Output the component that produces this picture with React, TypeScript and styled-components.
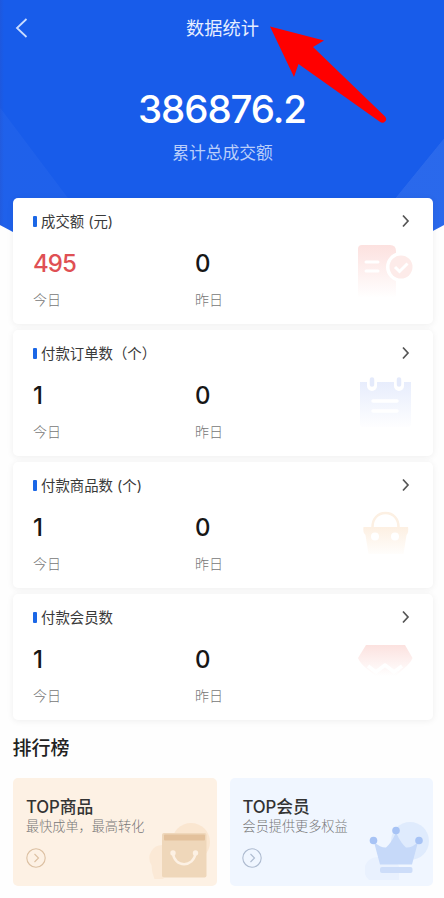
import React from 'react';
import styled, { createGlobalStyle } from 'styled-components';

const GlobalStyle = createGlobalStyle`
  * { box-sizing: border-box; }
  body {
    margin: 0;
    background: #fefefe;
    font-family: Inter, "Noto Sans CJK SC", sans-serif;
    color: #333;
  }
`;

const Page = styled.main`
  position: relative;
  width: 444px;
  height: 898px;
  overflow: hidden;
`;

const Header = styled.header`
  display: flex;
  flex-direction: column;
  align-items: center;
  height: 240px;
  color: #fff;
  background:
    linear-gradient(90deg, rgba(40, 80, 200, 0.35), transparent) left top / 4px 100% no-repeat,
    linear-gradient(to bottom right, transparent 50%, rgba(255, 255, 255, 0.08) 50.5%) right bottom / 83px 102px no-repeat,
    linear-gradient(to bottom left, transparent 50%, rgba(255, 255, 255, 0.03) 50.5%) left bottom / 100px 133px no-repeat,
    #185cea;
  clip-path: polygon(0 0, 100% 0, 100% 225px, 431px 232px, 400px 240px, 44px 240px, 13px 232px, 0 225px);
`;

const NavBar = styled.nav`
  display: grid;
  grid-template-columns: 60px 1fr 60px;
  align-items: center;
  width: 100%;
  height: 56px;
`;

const BackIcon = styled.svg`
  width: 14px;
  height: 22px;
  margin-left: 14px;
`;

const NavTitle = styled.h1`
  margin: 0;
  font-size: 18.2px;
  font-weight: 400;
  line-height: 24px;
  text-align: center;
  color: #e6eeff;
  padding-left: 1px;
`;

const Total = styled.div`
  margin-top: 30px;
  font-size: 38.5px;
  font-weight: 500;
  line-height: 46px;
  letter-spacing: -1.1px;
`;

const TotalLabel = styled.div`
  margin-top: 9px;
  padding-left: 1px;
  font-size: 16.8px;
  line-height: 24px;
  color: #b9cefa;
`;

const CardList = styled.section`
  position: relative;
  display: flex;
  flex-direction: column;
  gap: 6px;
  margin: -42px 11px 0 13px;
`;

const Card = styled.article`
  height: 126px;
  padding: 12px 19px 0 20px;
  border-radius: 5px;
  background: #fff;
  box-shadow: 0 1px 7px rgba(0, 0, 0, 0.065);
`;

const CardHead = styled.div`
  display: flex;
  align-items: center;
  height: 22px;
`;

const Marker = styled.i`
  width: 3.5px;
  height: 11px;
  margin-right: 4.5px;
  border-radius: 1px;
  background: #1b67e6;
`;

const CardTitle = styled.h2`
  flex: 1;
  margin: 0;
  padding-top: 1px;
  font-size: 14.4px;
  font-weight: 400;
  line-height: 22px;
  white-space: pre;
  color: #3a3a3a;
`;

const CardChevron = styled.svg`
  width: 16px;
  height: 16px;
`;

const CardBody = styled.div`
  display: grid;
  grid-template-columns: 162px 1fr 66px;
`;

const Stat = styled.div`
  padding-top: 16px;
`;

const StatValue = styled.div<{ $accent?: boolean }>`
  padding-top: 1px;
  font-size: 24px;
  font-weight: 500;
  line-height: 30px;
  letter-spacing: -0.9px;
  color: ${p => (p.$accent ? '#df5054' : '#161616')};
`;

const StatLabel = styled.div`
  margin-top: 11px;
  font-size: 14px;
  font-weight: 300;
  line-height: 20px;
  color: #777;
`;

const CardArt = styled.svg`
  width: 66px;
  height: 70px;
  margin-top: 6px;
`;

const RankTitle = styled.h2`
  margin: 16px 0 0 12.5px;
  font-size: 19px;
  font-weight: 500;
  line-height: 26px;
  color: #222;
`;

const RankGrid = styled.section`
  display: grid;
  grid-template-columns: 1fr 1fr;
  gap: 13px;
  margin: 16px 11px 0 13px;
`;

const RankCard = styled.article<{ $bg: string }>`
  display: grid;
  grid-template: 16px 22px 18px 1fr / 1fr 68px;
  height: 108px;
  padding-left: 13px;
  border-radius: 5px;
  background: ${p => p.$bg};
`;

const RankName = styled.h3`
  grid-area: 2 / 1;
  margin: 0;
  padding-top: 2px;
  font-size: 16.8px;
  font-weight: 500;
  line-height: 22px;
  letter-spacing: -0.1px;
  color: #333;
`;

const RankNote = styled.p`
  grid-area: 3 / 1 / 4 / 3;
  margin: 0;
  padding-top: 1px;
  font-size: 13.15px;
  font-weight: 300;
  line-height: 18px;
  color: #777;
  white-space: nowrap;
`;

const RankArrow = styled.svg`
  grid-area: 4 / 1;
  width: 20px;
  height: 20px;
  margin: 13.5px 0 0 -0.5px;
`;

const RankArt = styled.svg`
  grid-area: 1 / 2 / 5 / 3;
  width: 68px;
  height: 108px;
`;

const Pointer = styled.svg`
  position: absolute;
  top: 20px;
  left: 262px;
  width: 130px;
  height: 110px;
`;

function Fade({ id, color, from, to }: { id: string; color: string; from: number; to: number }) {
  return (
    <linearGradient id={id} gradientUnits="userSpaceOnUse" x1="0" y1={from} x2="0" y2={to}>
      <stop offset="0" stopColor={color} />
      <stop offset="1" stopColor={color} stopOpacity="0" />
    </linearGradient>
  );
}

const ReceiptArt = () => (
  <CardArt viewBox="348 238 66 70">
    <defs><Fade id="receipt" color="#fce0de" from={243} to={298} /></defs>
    <path d="M362 245h28q6 0 6 6v46h-38v-48q0-4 4-4z" fill="url(#receipt)" />
    <path d="M366 262h12M366 271h12" stroke="#fff" strokeWidth="3" strokeLinecap="round" />
    <circle cx="401" cy="267" r="15" fill="#fff" />
    <circle cx="401" cy="267" r="11.5" fill="#fdebe9" />
    <path d="M395 267l4.500 4.500 8-8" fill="none" stroke="#fff" strokeWidth="3" />
  </CardArt>
);

const CalendarArt = () => (
  <CardArt viewBox="348 238 66 70">
    <defs><Fade id="calendar" color="#e5ebfc" from={245} to={298} /></defs>
    <path d="M360 250h51v42q0 3-3 3h-45q-3 0-3-3z" fill="url(#calendar)" />
    <path d="M372 248v6M399 248v6" stroke="#fff" strokeWidth="10" strokeLinecap="round" />
    <path d="M372 247.500v5M399 247.500v5" stroke="#e4eafb" strokeWidth="4.500" strokeLinecap="round" />
    <path d="M373 269h24M373 279h24" stroke="#fff" strokeWidth="3.500" strokeLinecap="round" />
  </CardArt>
);

const BasketArt = () => (
  <CardArt viewBox="348 238 66 70">
    <defs><Fade id="basket" color="#fcebda" from={254} to={294} /></defs>
    <path d="M372.500 263c0-8 5-14 13-14s13 6 13 14" fill="none" stroke="#fcf0e3" strokeWidth="2.500" />
    <path d="M363 263h45q1 5-1.500 8l-3 19h-35l-3-19q-3-3-2-8z" fill="url(#basket)" />
    <circle cx="375" cy="272.500" r="4" fill="#fff" />
    <circle cx="395" cy="272.500" r="4" fill="#fff" />
  </CardArt>
);

const DiamondArt = () => (
  <CardArt viewBox="348 238 66 70">
    <defs><Fade id="diamond" color="#fbdcd9" from={243} to={280} /></defs>
    <path d="M366 249h39l7.500 13q-2 5-8 10L386 289l-20-17q-6-5-8-10z" fill="url(#diamond)" />
    <path d="M368 270l8 6 9-7 9 7 8-6" fill="none" stroke="#fff" strokeWidth="3.500" strokeLinejoin="round" />
  </CardArt>
);

const metrics = [
  { title: '成交额 (元)', today: '495', accent: true, Art: ReceiptArt },
  { title: '付款订单数（个）', today: '1', accent: false, Art: CalendarArt },
  { title: '付款商品数 (个)', today: '1', accent: false, Art: BasketArt },
  { title: '付款会员数', today: '1', accent: false, Art: DiamondArt },
];

function RoundArrow({ color }: { color: string }) {
  return (
    <RankArrow viewBox="0 0 20 20" fill="none" stroke={color} strokeWidth="1.100">
      <circle cx="10" cy="10" r="9.200" />
      <path d="M8.500 6l4 4-4 4" />
    </RankArrow>
  );
}

export default function App() {
  return (
    <Page>
      <GlobalStyle />
      <Header>
        <NavBar>
          <BackIcon viewBox="0 0 14 22" fill="none" stroke="#c9dcff" strokeWidth="1.800">
            <path d="M12.500 2L3 11l9.500 9" />
          </BackIcon>
          <NavTitle>数据统计</NavTitle>
        </NavBar>
        <Total>386876.2</Total>
        <TotalLabel>累计总成交额</TotalLabel>
      </Header>

      <CardList>
        {metrics.map(({ title, today, accent, Art }) => (
          <Card key={title}>
            <CardHead>
              <Marker />
              <CardTitle>{title}</CardTitle>
              <CardChevron viewBox="0 0 16 16" fill="none" stroke="#555" strokeWidth="1.700">
                <path d="M5 2.500l5 5.500-5 5.500" />
              </CardChevron>
            </CardHead>
            <CardBody>
              <Stat>
                <StatValue $accent={accent}>{today}</StatValue>
                <StatLabel>今日</StatLabel>
              </Stat>
              <Stat>
                <StatValue>0</StatValue>
                <StatLabel>昨日</StatLabel>
              </Stat>
              <Art />
            </CardBody>
          </Card>
        ))}
      </CardList>

      <RankTitle>排行榜</RankTitle>
      <RankGrid>
        <RankCard $bg="#fdf1e4">
          <RankName>TOP商品</RankName>
          <RankNote>最快成单，最高转化</RankNote>
          <RoundArrow color="#dcc0a2" />
          <RankArt viewBox="149 778 68 108">
            <circle cx="191" cy="830" r="19" fill="#fae6d0" transform="translate(0 12)" />
            <path d="M151.500 865a13 13 0 0 1 12-20v34h-9q-3-7-3-14z" fill="#fbe9d6" />
            <rect x="162" y="833" width="44.500" height="44.500" rx="2" fill="#efd7ba" />
            <rect x="164" y="834.500" width="41" height="6" rx="1" fill="#e3c19c" />
            <path d="M173 853c1 15 21 15 22.500 0" fill="none" stroke="#fdf1e4" strokeWidth="2.500" />
            <circle cx="173" cy="853" r="2.700" fill="#fdf1e4" />
            <circle cx="195.500" cy="853" r="2.700" fill="#fdf1e4" />
          </RankArt>
        </RankCard>
        <RankCard $bg="#f0f6ff">
          <RankName>TOP会员</RankName>
          <RankNote>会员提供更多权益</RankNote>
          <RoundArrow color="#aebbd0" />
          <RankArt viewBox="366 778 68 108">
            <circle cx="411" cy="841" r="19" fill="#dfebfd" />
            <path d="M378 857a13 13 0 0 0-8 23h30v-14a22 22 0 0 0-22-9z" fill="#e9f1fe" />
            <path d="M375 842q7 6 12 5.500 5-4 10-15 5 11 10 15 6 .5 12-5.500l-6 22.500h-32z" fill="#c6d9f9" />
            <circle cx="374.500" cy="840.500" r="3.800" fill="#a7c3f5" />
            <circle cx="397" cy="830.500" r="3.800" fill="#a7c3f5" />
            <circle cx="420" cy="840.500" r="3.800" fill="#a7c3f5" />
            <rect x="381" y="867" width="32.500" height="6" rx="2" fill="#cdddf9" />
          </RankArt>
        </RankCard>
      </RankGrid>

      <Pointer viewBox="262 20 130 110">
        <path d="M270 26.500L324 40.500 313 47 385 116.500Q387.500 119.500 385 121.500 383 124 379.500 121.500L298.500 64 294 77Z" fill="#ff0000" />
      </Pointer>
    </Page>
  );
}
